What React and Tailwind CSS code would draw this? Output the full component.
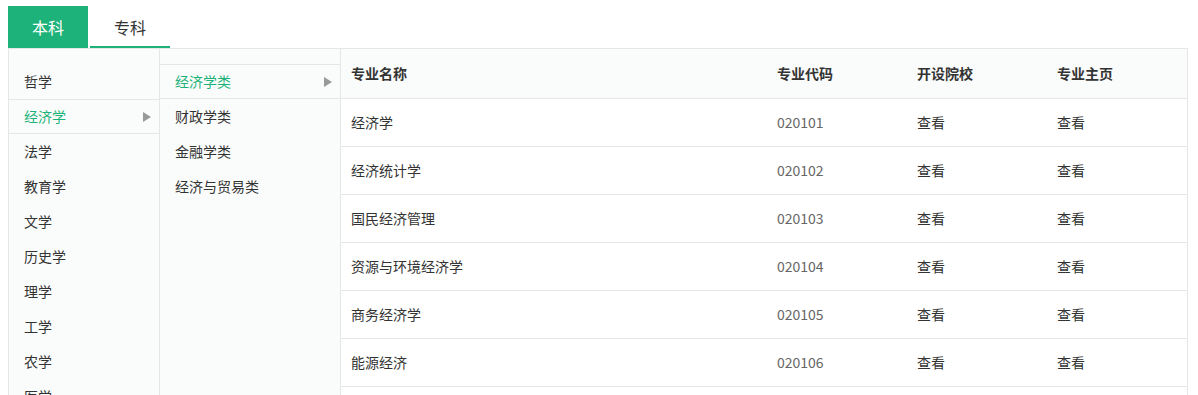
import React from "react";

const font = { fontFamily: '"Noto Sans CJK SC", "Noto Sans", sans-serif' };

const leftItems = ["哲学", "经济学", "法学", "教育学", "文学", "历史学", "理学", "工学", "农学", "医学"];
const midItems = ["经济学类", "财政学类", "金融学类", "经济与贸易类"];
const rows = [
  ["经济学", "020101"],
  ["经济统计学", "020102"],
  ["国民经济管理", "020103"],
  ["资源与环境经济学", "020104"],
  ["商务经济学", "020105"],
  ["能源经济", "020106"],
];

function Arrow() {
  return (
    <span className="ml-auto w-0 h-0 border-l-[8px] border-l-[#999999] border-y-[5.5px] border-y-transparent" />
  );
}

function NavItem({ label, active }) {
  return (
    <div
      className={
        "flex items-center h-[35px] pl-[15px] pr-[8px] text-[14px] border-y " +
        (active ? "border-[#e6e6e6] text-[#1db279]" : "border-transparent text-[#333333]")
      }
    >
      <span>{label}</span>
      {active && <Arrow />}
    </div>
  );
}

export default function App() {
  return (
    <div className="bg-white w-[1198px] h-[395px] overflow-hidden pl-[8px] pt-[6px]" style={font}>
      <div className="flex gap-[2px] h-[42px]">
        <div className="w-[80px] h-[42px] bg-[#1db279] text-white text-[16px] flex items-center justify-center">
          本科
        </div>
        <div className="w-[80px] h-[42px] border-b-2 border-[#1db279] text-[#333333] text-[16px] flex items-center justify-center pt-[2px]">
          专科
        </div>
      </div>
      <div className="w-[1180px] h-[400px] border border-[#e6e6e6] flex">
        <div className="w-[151px] shrink-0 border-r border-[#e6e6e6] bg-[#fafcfb] pt-[15px]">
          {leftItems.map((l) => (
            <NavItem key={l} label={l} active={l === "经济学"} />
          ))}
        </div>
        <div className="w-[181px] shrink-0 border-r border-[#e6e6e6] bg-[#fafcfb] pt-[15px]">
          {midItems.map((l) => (
            <NavItem key={l} label={l} active={l === "经济学类"} />
          ))}
        </div>
        <div className="flex-1">
          <div className="grid grid-cols-[426px_140px_140px_140px] h-[50px] bg-[#fafcfb] border-b border-[#e6e6e6] text-[14px] font-bold text-[#333333] items-center pb-[1px]">
            <div className="pl-[10px]">专业名称</div>
            <div className="pl-[10px]">专业代码</div>
            <div className="pl-[10px]">开设院校</div>
            <div className="pl-[10px]">专业主页</div>
          </div>
          {rows.map(([name, code]) => (
            <div
              key={code}
              className="grid grid-cols-[426px_140px_140px_140px] h-[48px] border-b border-[#e6e6e6] text-[14px] items-center bg-white"
            >
              <div className="pl-[10px] text-[#333333]">{name}</div>
              <div className="pl-[10px] text-[#666666]">{code}</div>
              <div className="pl-[10px] text-[#333333]">查看</div>
              <div className="pl-[10px] text-[#333333]">查看</div>
            </div>
          ))}
        </div>
      </div>
    </div>
  );
}
